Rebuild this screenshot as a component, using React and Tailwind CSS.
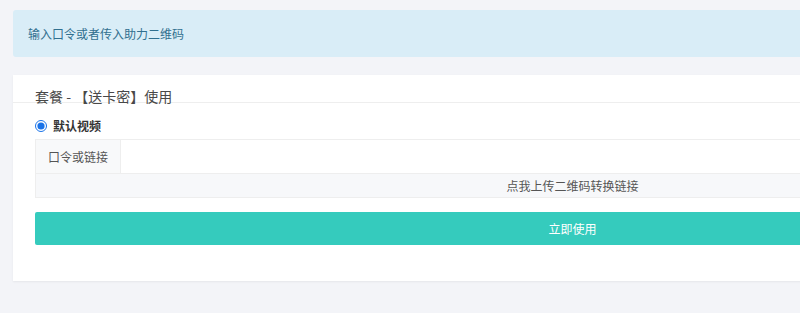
import React from "react";

const font = { fontFamily: '"Noto Sans CJK SC", "Noto Sans", sans-serif' };

export default function App() {
  return (
    <div className="min-h-[313px] w-[1145px] bg-[#f3f4f8] px-[13px] pt-[10px] pb-[32px]" style={font}>
      <div className="flex h-[47px] items-center rounded-[3px] bg-[#d9edf7] px-[15px] text-[12px] text-[#31708f]">
        输入口令或者传入助力二维码
      </div>

      <section className="mt-[18px] bg-white shadow-[0_1px_2px_rgba(0,0,0,0.06)]">
        <div className="h-[28px] border-b border-[#eeeeee] px-[22px] pt-[11px]">
          <h3 className="text-[14px] leading-[20px] text-[#484848]">套餐 - 【送卡密】使用</h3>
        </div>

        <div className="px-[22px] pt-[16px] pb-[36px]">
          <label className="flex h-[14px] items-center gap-[6px] text-[12px] font-bold text-[#333]">
            <input type="radio" checked readOnly className="m-0 h-[12px] w-[12px] accent-[#1a73e8]" />
            默认视频
          </label>

          <div className="mt-[6px] border border-[#eeeeee]">
            <div className="flex h-[33px]">
              <div className="flex w-[85px] items-center justify-center border-r border-[#eeeeee] bg-[#f8f9fa] text-[12px] text-[#555]">
                口令或链接
              </div>
              <input type="text" className="flex-1 bg-white px-3 text-[12px] outline-none" />
            </div>
            <div className="flex h-[24px] items-center justify-center border-t border-[#eeeeee] bg-[#f7f8fa] text-[12px] text-[#555]">
              点我上传二维码转换链接
            </div>
          </div>

          <button
            type="button"
            className="mt-[14px] flex h-[33px] w-full items-center justify-center rounded-[2px] bg-[#35cbbd] text-[12px] text-white"
          >
            立即使用
          </button>
        </div>
      </section>
    </div>
  );
}
